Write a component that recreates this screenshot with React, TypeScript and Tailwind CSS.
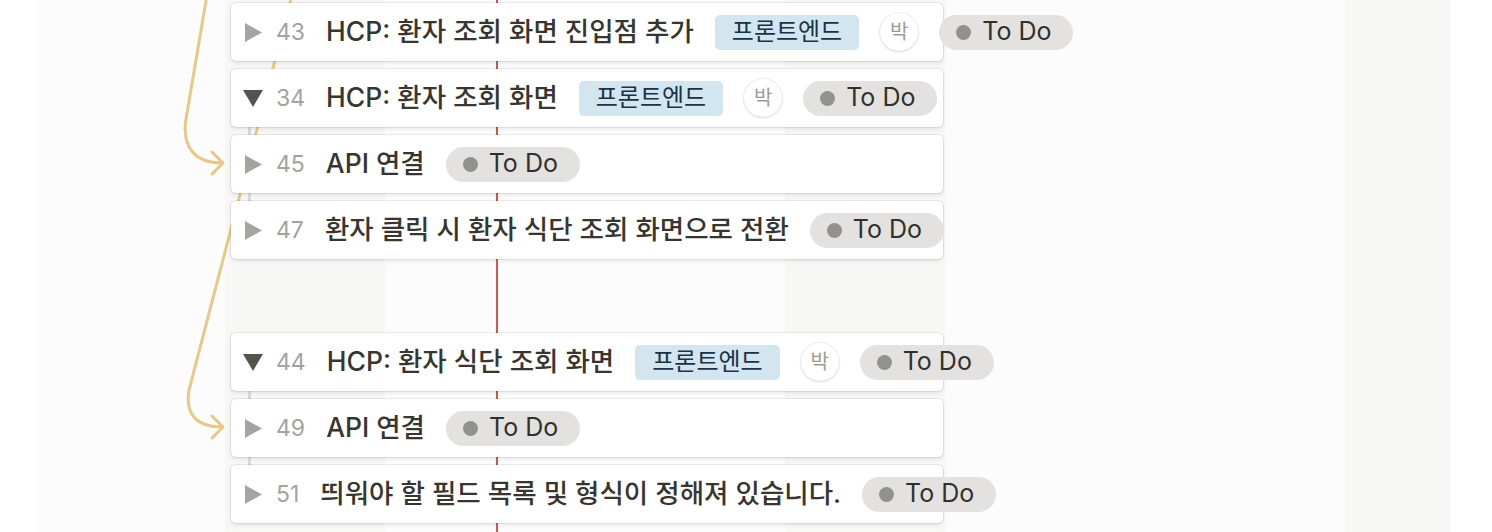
import React from 'react';

type Row = {
  id: number;
  open: boolean;
  title: string;
  tag?: string;
  owner?: string;
  status: string;
} | null;

const rows: Row[] = [
  { id: 43, open: false, title: 'HCP: 환자 조회 화면 진입점 추가', tag: '프론트엔드', owner: '박', status: 'To Do' },
  { id: 34, open: true, title: 'HCP: 환자 조회 화면', tag: '프론트엔드', owner: '박', status: 'To Do' },
  { id: 45, open: false, title: 'API 연결', status: 'To Do' },
  { id: 47, open: false, title: '환자 클릭 시 환자 식단 조회 화면으로 전환', status: 'To Do' },
  null,
  { id: 44, open: true, title: 'HCP: 환자 식단 조회 화면', tag: '프론트엔드', owner: '박', status: 'To Do' },
  { id: 49, open: false, title: 'API 연결', status: 'To Do' },
  { id: 51, open: false, title: '띄워야 할 필드 목록 및 형식이 정해져 있습니다.', status: 'To Do' },
];

// day columns of the timeline, weekends shaded
const days = [
  { w: 'w-[190px]', weekend: false },
  { w: 'w-[160px]', weekend: true },
  { w: 'w-[400px]', weekend: false },
  { w: 'w-[160px]', weekend: true },
  { w: 'w-[400px]', weekend: false },
  { w: 'w-[105px]', weekend: true },
];

const Toggle = ({ open }: { open: boolean }) => (
  <div className="w-[20px] h-[20px] flex items-center justify-center shrink-0">
    {open ? (
      <svg width="20" height="17" viewBox="0 0 20 17">
        <polygon points="0,0 20,0 10,17" fill="#55534e" />
      </svg>
    ) : (
      <svg width="17" height="19" viewBox="0 0 17 19">
        <polygon points="0,0 17,9.5 0,19" fill="#a5a4a1" />
      </svg>
    )}
  </div>
);

const Card = ({ row }: { row: NonNullable<Row> }) => (
  <div className="w-[712px] h-[58px] shrink-0 rounded-[5px] bg-white shadow-[0_0_0_1px_rgba(15,15,15,0.07),0_2px_4px_rgba(15,15,15,0.09)] flex items-center pl-[12px] whitespace-nowrap">
    <Toggle open={row.open} />
    <span className="ml-[13px] shrink-0 text-[23px] text-[#a3a29f]">{row.id}</span>
    <span className="ml-[21px] shrink-0 text-[26.5px] font-medium text-[#37352f]">{row.title}</span>
    {row.tag && (
      <span className="ml-[21px] shrink-0 h-[35px] px-[17px] rounded-[5px] bg-[#d3e5ef] text-[#183347] text-[24px] flex items-center">
        {row.tag}
      </span>
    )}
    {row.owner && (
      <span className="ml-[21px] shrink-0 w-[38px] h-[38px] rounded-full bg-white shadow-[0_0_0_1px_rgba(15,15,15,0.05),0_1px_3px_rgba(15,15,15,0.12)] flex items-center justify-center text-[20px] text-[#9b9a97]">
        {row.owner}
      </span>
    )}
    <span className="ml-[21px] shrink-0 h-[35px] pl-[17px] pr-[22px] rounded-full bg-[#e3e2e0] flex items-center text-[25px] text-[#32302c]">
      <span className="w-[15px] h-[15px] rounded-full bg-[#91918e] mr-[11px]" />
      {row.status}
    </span>
  </div>
);

export default function App() {
  return (
    <div className="w-[1492px] h-[532px] flex bg-white overflow-hidden font-['Inter','Noto_Sans_CJK_KR',sans-serif]">
      <div className="w-[35px] shrink-0" />
      <div className="relative w-[1415px] h-full shrink-0">
        <div className="flex h-full">
          {days.map((d, i) => (
            <div key={i} className={`${d.w} h-full ${d.weekend ? 'bg-[#f7f7f6]' : 'bg-[#fcfcfc]'}`} />
          ))}
        </div>

        {/* today marker */}
        <div className="absolute top-0 bottom-0 left-[461px] w-[2px] bg-[#d5564d]" />

        {/* dependency arrows */}
        <svg className="absolute top-0 left-0" width="1415" height="532" viewBox="35 0 1415 532" fill="none">
          <rect x="248" y="124" width="3" height="80" rx="1.5" fill="#d9d9d7" />
          <rect x="248" y="388" width="3" height="80" rx="1.5" fill="#d9d9d7" />
          <path d="M207 -5 L185.5 122 C183 148 195 163 222 163" stroke="#e7c887" strokeWidth="3" strokeLinecap="round" />
          <path d="M212 152 L223 163 L212 174" stroke="#e7c887" strokeWidth="3" strokeLinecap="round" strokeLinejoin="round" />
          <path d="M292 -5 L189 390 C185 414 196 427 222 427" stroke="#e7c887" strokeWidth="3" strokeLinecap="round" />
          <path d="M212 416 L223 427 L212 438" stroke="#e7c887" strokeWidth="3" strokeLinecap="round" strokeLinejoin="round" />
        </svg>

        <div className="absolute inset-0 pt-[3px] pl-[196px] flex flex-col gap-[8px]">
          {rows.map((r, i) =>
            r ? <Card key={i} row={r} /> : <div key={i} className="h-[58px] shrink-0" />
          )}
        </div>
      </div>
      <div className="flex-1" />
    </div>
  );
}
